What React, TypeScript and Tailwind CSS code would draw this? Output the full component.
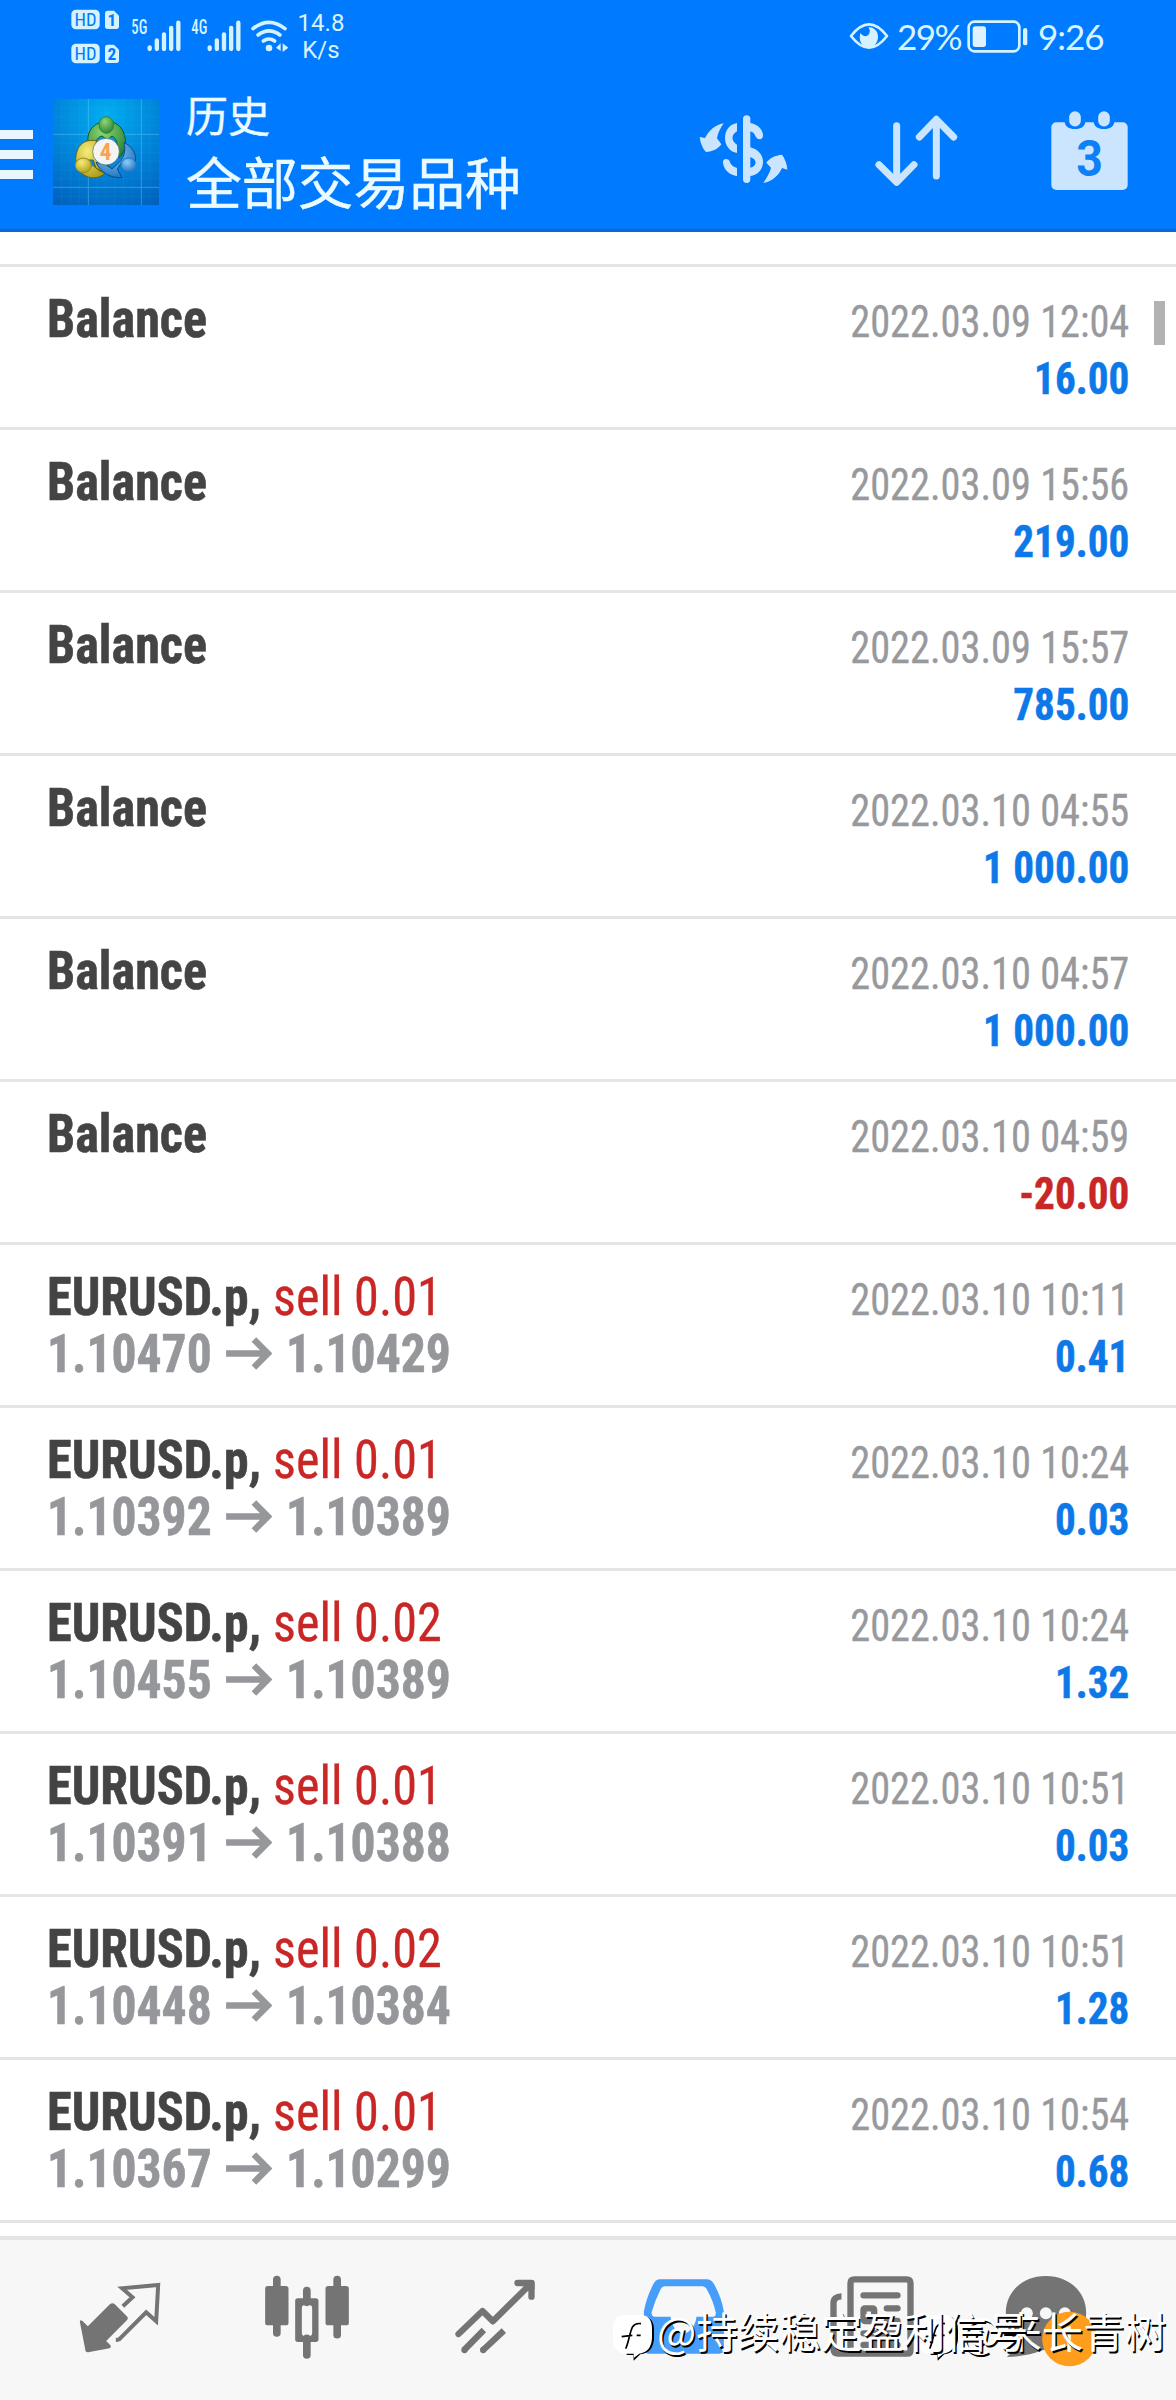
import type { ReactNode } from "react";

interface Deal {
  name: string;
  side?: string;
  open?: string;
  close?: string;
  time: string;
  amount: string;
}

const deals: Deal[] = [
  { name: "Balance", time: "2022.03.09 12:04", amount: "16.00" },
  { name: "Balance", time: "2022.03.09 15:56", amount: "219.00" },
  { name: "Balance", time: "2022.03.09 15:57", amount: "785.00" },
  { name: "Balance", time: "2022.03.10 04:55", amount: "1 000.00" },
  { name: "Balance", time: "2022.03.10 04:57", amount: "1 000.00" },
  { name: "Balance", time: "2022.03.10 04:59", amount: "-20.00" },
  { name: "EURUSD.p,", side: "sell 0.01", open: "1.10470", close: "1.10429", time: "2022.03.10 10:11", amount: "0.41" },
  { name: "EURUSD.p,", side: "sell 0.01", open: "1.10392", close: "1.10389", time: "2022.03.10 10:24", amount: "0.03" },
  { name: "EURUSD.p,", side: "sell 0.02", open: "1.10455", close: "1.10389", time: "2022.03.10 10:24", amount: "1.32" },
  { name: "EURUSD.p,", side: "sell 0.01", open: "1.10391", close: "1.10388", time: "2022.03.10 10:51", amount: "0.03" },
  { name: "EURUSD.p,", side: "sell 0.02", open: "1.10448", close: "1.10384", time: "2022.03.10 10:51", amount: "1.28" },
  { name: "EURUSD.p,", side: "sell 0.01", open: "1.10367", close: "1.10299", time: "2022.03.10 10:54", amount: "0.68" },
];

function HdBadges() {
  return (
    <svg viewBox="210 24 150 168" className="mt-[8px] h-[56px] w-[50px]">
      {[0, 102].map((dy, i) => (
        <g key={dy} transform={`translate(0 ${dy})`}>
          <rect x="214" y="29" width="85" height="59" rx="14" fill="#d5f3ff" />
          <path d="M323 32h19l15 15v32a8 8 0 0 1-8 8h-26a8 8 0 0 1-8-8v-39a8 8 0 0 1 8-8z" fill="#d5f3ff" />
          <text x="256.500" y="78" fontSize="54" textAnchor="middle" textLength="66" lengthAdjust="spacingAndGlyphs" fill="#007aff" className="font-['Roboto_Condensed']">
            HD
          </text>
          <text x="336" y="78" fontSize="52" textAnchor="middle" fill="#007aff" className="font-['Roboto_Condensed'] font-bold">
            {i + 1}
          </text>
        </g>
      ))}
    </svg>
  );
}

function Signal({ label }: { label: string }) {
  return (
    <svg viewBox="390 54 159 105" className="mt-[18px] h-[35px] w-[53px] overflow-visible">
      <text x="394" y="103" fontSize="58" textLength="48" lengthAdjust="spacingAndGlyphs" fill="#d5f3ff" className="font-['Roboto_Condensed'] font-medium">
        {label}
      </text>
      <g stroke="#d5f3ff" strokeWidth="13" strokeLinecap="round">
        <path d="M449 142v5M470.500 121v26M492 103v44M513.500 84v63M535 68v79" />
      </g>
    </svg>
  );
}

function WifiIcon() {
  return (
    <svg viewBox="750 54 120 105" className="ml-[14px] mt-[18px] h-[35px] w-[40px]">
      <g fill="none" stroke="#d5f3ff" strokeWidth="11" strokeLinecap="round">
        <path d="M759 86Q807 48 855 86" />
        <path d="M774 105Q807 80 840 105" />
        <path d="M790 123Q807 111 824 123" />
      </g>
      <circle cx="807" cy="144" r="10" fill="#d5f3ff" />
      <path d="M828 143l14-13v23zM848 130l17 13-17 13z" fill="#d5f3ff" />
    </svg>
  );
}

function StatusBar() {
  return (
    <div className="flex h-[75px] items-start pl-[70px] text-[#d8f4ff]">
      <HdBadges />
      <div className="ml-[10px] flex gap-[7px]">
        <Signal label="5G" />
        <Signal label="4G" />
      </div>
      <div className="-ml-[7px]">
        <WifiIcon />
      </div>
      <div className="ml-[7px] mt-[10px] w-[48px] text-center font-['Roboto'] text-[24px] leading-[27px]">
        14.8
        <br />
        K/s
      </div>
      <svg viewBox="567 60 120 93" className="ml-auto mt-[20px] h-[31px] w-[40px]">
        <path d="M573 108Q627 38 681 108Q627 178 573 108z" fill="none" stroke="#d5f3ff" strokeWidth="8" strokeLinejoin="round" />
        <path d="M601 99c-6 24 5 44 26 44s35-30 22-50c-6-8-14-12-24-11 4 6 6 10 3 18-4 10-16 13-27-1z" fill="#d5f3ff" />
      </svg>
      <span className="ml-[8px] mt-[15px] w-[70px] font-['Lato'] text-[35px] leading-[42px] tracking-[-1.600px]">29%</span>
      <svg viewBox="921 57 186 105" className="mt-[19px] h-[35px] w-[62px]">
        <rect x="926" y="65" width="152" height="89" rx="17" fill="none" stroke="#d5f3ff" strokeWidth="8" />
        <rect x="938" y="79" width="40" height="62" rx="8" fill="#dff0ff" />
        <rect x="1089" y="84" width="13" height="52" rx="6.500" fill="#d5f3ff" />
      </svg>
      <span className="ml-[9px] mr-[70px] mt-[15px] w-[68px] font-['Lato'] text-[35px] leading-[42px] tracking-[-1px]">9:26</span>
    </div>
  );
}

function AppLogo() {
  return (
    <svg viewBox="9 12 318 318" className="ml-[20px] mt-[24px] size-[106px]">
      <defs>
        <radialGradient id="sky" cx="0.5" cy="0.15" r="0.95">
          <stop offset="0" stopColor="#00aef0" />
          <stop offset="0.5" stopColor="#0086da" />
          <stop offset="1" stopColor="#0062bd" />
        </radialGradient>
        <radialGradient id="green" cx="0.4" cy="0.3" r="0.8">
          <stop offset="0" stopColor="#8fd672" />
          <stop offset="1" stopColor="#1f7d33" />
        </radialGradient>
        <radialGradient id="yellow" cx="0.4" cy="0.3" r="0.8">
          <stop offset="0" stopColor="#f5ec7a" />
          <stop offset="1" stopColor="#a99a14" />
        </radialGradient>
        <radialGradient id="blue" cx="0.4" cy="0.3" r="0.8">
          <stop offset="0" stopColor="#8ad0fa" />
          <stop offset="1" stopColor="#1769b8" />
        </radialGradient>
      </defs>
      <rect x="9" y="12" width="318" height="318" fill="url(#sky)" />
      <g stroke="#7fd0ff" strokeWidth="1" opacity="0.18">
        <path d="M35 12v318M62 12v318M88 12v318M141 12v318M168 12v318M194 12v318M220 12v318M247 12v318M300 12v318M9 40h318M9 66h318M9 92h318M9 145h318M9 172h318M9 198h318M9 225h318M9 251h318M9 304h318" />
      </g>
      <path d="M115 12v318M274 12v318M9 118h318M9 277h318" stroke="#7fd0ff" strokeWidth="3" opacity="0.4" />
      <g strokeWidth="3">
        <path d="M150 83c-26 8-40 34-36 58l22 8c2-16 10-24 20-26l16 12 14-12c14 8 20 22 12 48l8 18c22-18 26-50 14-78-8-18-22-28-40-32z" fill="url(#green)" stroke="#0c5a2e" />
        <path d="M140 137c-26-4-46 4-56 24-6 14-8 26-6 40l30-6 22 0 8 24 26 16c-14 14-36 18-56 8l-14-8 34-24 20 16 14 6-18-36c-8-20-10-40-4-60z" fill="url(#yellow)" stroke="#6d6310" />
        <path d="M222 142c24 12 38 34 34 58l-24-6-16 6-14 22 14 26c-34 2-64-14-78-46l28 6 20 14 22-20c14-14 20-34 14-60z" fill="url(#blue)" stroke="#0d4b8c" />
        <ellipse cx="169" cy="90" rx="22" ry="25" fill="url(#green)" stroke="#2a8a38" />
        <ellipse cx="100" cy="211" rx="24" ry="22" fill="url(#yellow)" stroke="#9a8d18" />
        <ellipse cx="236" cy="210" rx="23" ry="21" fill="url(#blue)" stroke="#2277c2" />
      </g>
      <circle cx="168" cy="170" r="40" fill="#f4f3f6" stroke="#3c6b58" strokeWidth="2" />
      <text x="167" y="194" fontSize="70" textAnchor="middle" fill="#f6a452" className="font-['Roboto_Condensed'] font-bold">
        4
      </text>
    </svg>
  );
}

function AppBar() {
  return (
    <div className="flex h-[157px] items-start border-b-3 border-[#1167cf]">
      <div className="mt-[55px] flex w-[33px] flex-col gap-[11px]">
        <div className="h-[9px] bg-[#e8f6ff]" />
        <div className="h-[9px] bg-[#e8f6ff]" />
        <div className="h-[9px] bg-[#e8f6ff]" />
      </div>
      <AppLogo />
      <div className="ml-[27px] mt-[14px] font-['Noto_Sans_CJK_SC',sans-serif] text-[#eafaff] [-webkit-text-stroke:0.4px]">
        <div className="text-[42px] leading-[50px]">历史</div>
        <div className="mt-[8px] text-[56px] leading-[66px] tracking-[-0.200px]">全部交易品种</div>
      </div>

      {/* deposit / withdraw */}
      <svg viewBox="111 336 279 225" className="ml-auto mt-[37px] h-[75px] w-[93px]">
        <g fill="#cce5ff">
          <path d="M191 370c-10 15-18 30-20 45l13 18c-10 14-26 22-46 23-10-10-17-26-19-45l16 3c10-20 30-40 56-44z" />
          <path d="M310 549c10-15 19-30 23-46l-14-15c10-14 26-22 47-24 9 12 15 28 16 45l-16-5c-10 22-28 40-56 45z" />
          <path d="M231 369c-22 4-36 22-36 45s14 41 36 45v-25c-18-10-18-30 0-40z" />
          <path d="M198 477c-6 0-10 4-9 12 3 22 20 36 42 39v-24c-14-4-20-12-22-20-2-5-6-7-11-7z" />
          <path fillRule="evenodd" d="M249 357a11 11 0 0 1 22 0v12c18 3 32 14 37 30 3 10-1 19-9 19-6 0-10-4-13-10-3-8-8-12-15-14v48c22 6 38 22 38 43 0 24-16 40-38 43v10a11 11 0 0 1-22 0zM271 471v32c20-4 22-24 0-32z" />
        </g>
      </svg>
      {/* sort */}
      <svg viewBox="639 336 264 231" className="ml-[83px] mt-[37px] h-[77px] w-[88px]">
        <path d="M710 377v168M657 494l53 53 52-53M829 528V362M778 411l51-53 52 53" fill="none" stroke="#cce5ff" strokeWidth="21" strokeLinecap="round" strokeLinejoin="round" />
      </svg>
      {/* calendar */}
      <svg viewBox="1170 330 237 243" className="ml-[89px] mr-[47px] mt-[35px] h-[81px] w-[79px]">
        <rect x="1174" y="367" width="229" height="203" rx="15" fill="#cce5ff" />
        <path d="M1214 366c2 14 12 21 31 21s29-7 31-21zM1301 366c2 14 12 21 31 21s29-7 31-21z" fill="#007aff" />
        <path d="M1245 351v11M1332 351v11" stroke="#cce5ff" strokeWidth="35" strokeLinecap="round" />
        <text x="1289" y="527" fontSize="148" textAnchor="middle" textLength="80" lengthAdjust="spacingAndGlyphs" fill="#0d80f5" className="font-['Roboto'] font-bold">
          3
        </text>
      </svg>
    </div>
  );
}

function DealRow({ deal }: { deal: Deal }) {
  const negative = deal.amount.startsWith("-");

  return (
    <div className="flex h-[163px] justify-between border-t-3 border-[#e5e5e5] px-[47px] font-['Roboto_Condensed']">
      <div className="pt-[23px] text-[54px] leading-[57px]">
        <div className="origin-left scale-x-[0.93] whitespace-nowrap text-[#444444]">
          <span className="font-bold [-webkit-text-stroke:0.6px]">{deal.name}</span>
          {deal.side && <span className="ml-[13px] text-[#c92626] [-webkit-text-stroke:0.3px]">{deal.side}</span>}
        </div>
        {deal.open && (
          <div className="flex origin-left scale-x-[0.918] font-bold text-[#95979b] [-webkit-text-stroke:0.6px]">
            {deal.open}
            <svg viewBox="0 0 48 57" preserveAspectRatio="none" className="ml-[15px] mr-[14px] h-[57px] w-[52px]">
              <path d="M1 28.500h43M29 14.500l14 14-14 14" fill="none" stroke="#95979b" strokeWidth="6.500" />
            </svg>
            {deal.close}
          </div>
        )}
      </div>
      <div className="pt-[27px] text-right text-[44px] leading-[57px]">
        <div className="origin-right scale-x-[0.917] text-[#98999d] [-webkit-text-stroke:0.3px]">{deal.time}</div>
        <div
          className={`origin-right scale-x-[0.935] font-bold [-webkit-text-stroke:0.5px] ${
            negative ? "text-[#c92626]" : "text-[#0d78e8]"
          }`}
        >
          {deal.amount}
        </div>
      </div>
    </div>
  );
}

function NavItem({ viewBox, children }: { viewBox: string; children: ReactNode }) {
  return (
    <div className="flex w-[187px] justify-center">
      <svg viewBox={viewBox} className="mt-[30px] size-[96px] overflow-visible" fill="#747474">
        {children}
      </svg>
    </div>
  );
}

function BottomNav() {
  return (
    <div className="flex h-[164px] border-t-4 border-[#e4e4e4] bg-[#f7f7f7] pl-[26px]">
      <NavItem viewBox="4.5 15 288 288">
        <path d="M28 170q0-8 8-2l16 16 66-66q8-7 15 0l36 36q6 6 0 12l-62 62 12 12q5 6-2 10l-60 11q-13 4-13-9z" />
        <path d="M157 124l29-27-31-27 108-10-6 109-30-27-81 81q-4 2-10 2" fill="none" stroke="#747474" strokeWidth="12" />
      </NavItem>
      <NavItem viewBox="565.5 15 288 288">
        <rect x="584" y="63" width="70" height="118" rx="8" />
        <rect x="765" y="63" width="70" height="118" rx="8" />
        <path d="M619 44v160M800 44v165M709 77v35M709 220v50" stroke="#747474" strokeWidth="23" strokeLinecap="round" />
        <path fillRule="evenodd" d="M682 100h54a8 8 0 0 1 8 8v115a8 8 0 0 1-8 8h-54a8 8 0 0 1-8-8v-115a8 8 0 0 1 8-8zM704 120a10 10 0 0 0-10 10v73a10 10 0 0 0 10 10h11a10 10 0 0 0 10-10v-73a10 10 0 0 0-10-10z" />
      </NavItem>
      <NavItem viewBox="16.5 15 288 288">
        <g fill="none" stroke="#747474" strokeWidth="19" strokeLinejoin="round">
          <path d="M54 207l72-69 31 31L268 59M231 54h42v41" strokeLinecap="round" />
          <path d="M130 195l-59 60M190 197l-62 58" />
        </g>
        <circle cx="72" cy="255" r="9.500" />
        <circle cx="128" cy="255" r="9.500" />
        <path d="M262 45h12q8 0 8 8v20l-20-5z" />
      </NavItem>
      <NavItem viewBox="157.5 150 288 288">
        <path fillRule="evenodd" d="M238 178h141q12 0 20 12 24 40 31 85v112q0 14-14 14H204q-14 0-14-14V275q8-45 30-85 7-12 18-12zM253 199q-8 0-12 7-18 36-28 72 1 12 10 12h47c4 34 24 50 38 50s36-16 40-50h50q8 0 8-12-8-36-26-68-6-11-14-11z" fill="#469dfa" />
      </NavItem>
      <NavItem viewBox="718.5 150 288 288">
        <path d="M783 229c-16 0-24 8-24 20v138q0 14 14 14h208q9 0 9-12V190q0-12-12-12H822q-12 0-12 12v212" fill="none" stroke="#747474" strokeWidth="19" />
        <path d="M849 226h102M919 265h32M919 303h32M849 340h102M849 375h102" stroke="#747474" strokeWidth="19" strokeLinecap="round" />
        <rect x="849" y="265" width="32" height="38" fill="none" stroke="#747474" strokeWidth="19" rx="4" />
      </NavItem>
      <NavItem viewBox="379.5 150 288 288">
        <path d="M496 168c70 0 121 48 121 110s-45 109-110 109c-24 0-50 22-128 24 16-14 32-32 30-46-22-20-33-50-33-87 0-62 50-110 120-110z" />
        <g fill="#f7f7f7">
          <circle cx="439" cy="280" r="18" />
          <circle cx="496" cy="280" r="18" />
          <circle cx="553" cy="280" r="18" />
        </g>
        <circle cx="567" cy="357" r="82" fill="#ff9d1c" />
        <text x="563" y="396" fontSize="110" textAnchor="middle" fill="#ffffff" className="font-['Roboto']">
          1
        </text>
      </NavItem>
    </div>
  );
}

function Watermark({ text, className }: { text: string; className: string }) {
  return (
    <div className={`absolute top-[2307px] flex items-start ${className}`}>
      <svg viewBox="99 261 132 162" className="h-[54px] w-[44px]">
        <path d="M139 289h52q31 3 31 42v26q-3 42-41 46l-20 19-1-17h-20z" fill="#000000" />
        <path d="M134 285h52q30 3 30 42v28q-3 42-38 46l-17 13v-13h-20q-42-3-42-42v-32q0-42 35-42z" fill="#ffffff" />
        <path d="M137 386c9-18 12-50 21-66q8-12 25-9M125 350l32-4M170 346h12" fill="none" stroke="#000000" strokeWidth="5" />
      </svg>
      <span className="whitespace-nowrap font-['Noto_Sans_CJK_SC',sans-serif] text-[41.500px] leading-[46px] text-white [text-shadow:1.5px_1.5px_0_#000]">
        {text}
      </span>
    </div>
  );
}

export default function App() {
  return (
    <div className="relative flex h-[2400px] w-[1176px] flex-col overflow-hidden bg-white">
      <div className="bg-[#007aff]">
        <StatusBar />
        <AppBar />
      </div>
      <div className="relative flex-1 pt-[32px]">
        {deals.map((deal, index) => (
          <DealRow key={index} deal={deal} />
        ))}
        <div className="h-[3px] bg-[#e5e5e5]" />
        {/* scroll thumb */}
        <div className="absolute right-[11px] top-[69px] h-[44px] w-[11px] bg-[#b2b2b2]" />
      </div>
      <BottomNav />
      <Watermark text="@来长青树" className="left-[917px]" />
      <Watermark text="@持续稳定盈利信号" className="left-[613px]" />
    </div>
  );
}
